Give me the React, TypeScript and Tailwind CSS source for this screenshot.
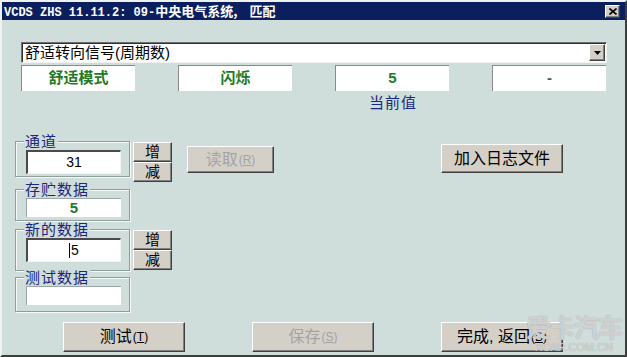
const cjk = "font-['Liberation_Sans','Noto_Sans_CJK_SC',sans-serif]";

const raised =
  "bg-[#d4d0c8] border border-t-white border-l-white border-r-[#404040] border-b-[#404040] shadow-[inset_-1px_-1px_0_#808080]";

const Btn = ({ label, hot, disabled, className }: { label: string; hot?: string; disabled?: boolean; className: string }) => (
  <div className={`${raised} ${className} flex items-center justify-center ${disabled ? "text-[#a4a4a4]" : "text-black"}`}>
    <span className="text-[16px] leading-none">{label}</span>
    {hot && (
      <span className="text-[12px] leading-none ml-[1px]">
        (<span className="underline">{hot}</span>)
      </span>
    )}
  </div>
);

const Group = ({ label, className, children }: { label: string; className: string; children: React.ReactNode }) => (
  <div className={`relative shrink-0 w-[115px] border border-[#8e9e9b] shadow-[inset_1px_1px_0_#f4f8f7,1px_1px_0_#f4f8f7] pl-[10px] pt-[8px] ${className}`}>
    <span className="absolute -top-[8px] left-[8px] px-[1px] bg-[#cfdedb] text-[15px] leading-[15px] text-[#1a2780] tracking-[1px]">
      {label}
    </span>
    {children}
  </div>
);

const Spin = ({ className }: { className: string }) => (
  <div className={`flex flex-col w-[39px] shrink-0 ${className}`}>
    <div className={`${raised} h-[20px] flex items-center justify-center text-[15px]`}>增</div>
    <div className={`${raised} h-[20px] flex items-center justify-center text-[15px]`}>减</div>
  </div>
);

export default function App() {
  return (
    <div className={`relative w-[627px] h-[357px] overflow-hidden bg-[#cfdedb] border-2 border-t-[#eef3f2] border-l-[#eef3f2] border-r-[#3c3c3c] border-b-[#3c3c3c] ${cjk}`}>
      {/* title bar */}
      <div className="h-[18px] bg-[#0b1f5e] flex items-center pl-[2px] pr-[5px]">
        <span className="text-white font-bold text-[12px] leading-none font-['Liberation_Mono','Noto_Sans_CJK_SC',monospace]">
          VCDS ZHS 11.11.2: 09-
          <span className="text-[13px] font-['Noto_Sans_CJK_SC',sans-serif]">中央电气系统,</span>
          <span className="ml-[12px] text-[13px] font-['Noto_Sans_CJK_SC',sans-serif]">匹配</span>
        </span>
        <div className={`ml-auto w-[15px] h-[13px] ${raised} flex items-center justify-center`}>
          <svg width="8" height="7" viewBox="0 0 8 7">
            <path d="M0.5 0.5 L7.5 6.5 M7.5 0.5 L0.5 6.5" stroke="#000" strokeWidth="1.6" />
          </svg>
        </div>
      </div>

      {/* top section */}
      <div className="pl-[19px]">
        <div className="mt-[22px] w-[586px] h-[21px] bg-white border-t border-l border-[#6e6e6e] shadow-[inset_1px_1px_0_#303030] border-b border-r border-b-[#f2f2f2] border-r-[#f2f2f2] flex items-center">
          <span className="ml-[3px] text-[15px] leading-none text-black">舒适转向信号(周期数)</span>
          <div className={`ml-auto mr-[1px] w-[16px] h-[17px] ${raised} flex items-center justify-center`}>
            <svg width="7" height="4" viewBox="0 0 7 4">
              <path d="M0 0 H7 L3.5 4 Z" fill="#000" />
            </svg>
          </div>
        </div>

        <div className="mt-[2px] flex gap-[43px]">
          {["舒适模式", "闪烁", "5", "-"].map((v, i) => (
            <div
              key={i}
              className={`w-[114px] h-[26px] bg-white border-t border-l border-[#8a8a8a] flex items-center justify-center text-[15px] font-bold ${i === 3 ? "text-[#555]" : "text-[#237a23]"}`}
            >
              {v}
            </div>
          ))}
        </div>
        <div className="mt-[3px] h-[16px] w-[114px] ml-[315px] flex items-center justify-center text-[15px] leading-none text-[#1a2780] tracking-[1px]">
          当前值
        </div>
      </div>

      {/* lower section */}
      <div className="pl-[13px] mt-[31px] text-black">
        <div className="flex items-start h-[36px]">
          <Group label="通道" className="h-[36px]">
            <div className="w-[95px] h-[24px] bg-white border-t-2 border-l-2 border-[#4a4a4a] border-b border-r border-b-[#f4f4f4] border-r-[#f4f4f4] flex items-center justify-center text-[14px]">
              31
            </div>
          </Group>
          <Spin className="ml-[3px] mt-[1px]" />
          <Btn label="读取" hot="R" disabled className="ml-[15px] mt-[5px] w-[87px] h-[27px]" />
          <Btn label="加入日志文件" className="ml-[167px] mt-[3px] w-[122px] h-[29px]" />
        </div>

        <Group label="存贮数据" className="mt-[12px] h-[32px]">
          <div className="w-[95px] h-[19px] bg-white border-t border-l border-[#9aa6a4] flex items-center justify-center text-[15px] font-bold text-[#237a23]">
            5
          </div>
        </Group>

        <div className="flex items-start h-[42px] mt-[8px]">
          <Group label="新的数据" className="h-[42px]">
            <div className="w-[95px] h-[24px] bg-white border-t-2 border-l-2 border-[#4a4a4a] border-b border-r border-b-[#f4f4f4] border-r-[#f4f4f4] flex items-center justify-center text-[14px]">
              <span className="w-[1px] h-[15px] bg-black mr-[1px]" />
              5
            </div>
          </Group>
          <Spin className="ml-[3px] mt-[1px]" />
        </div>

        <Group label="测试数据" className="mt-[6px] h-[35px]">
          <div className="w-[95px] h-[19px] bg-white border-t border-l border-[#9aa6a4]" />
        </Group>

        <div className="mt-[10px] ml-[48px] flex gap-[67px]">
          <Btn label="测试" hot="T" className="w-[122px] h-[30px]" />
          <Btn label="保存" hot="S" disabled className="w-[122px] h-[30px]" />
          <Btn label="完成, 返回" hot="B" className="w-[122px] h-[30px]" />
        </div>
      </div>

      {/* watermark */}
      <div className="absolute right-[3px] bottom-[2px] flex flex-col items-center text-white/60 pointer-events-none [text-shadow:0_0_1px_#888]">
        <span className="text-[25px] leading-[26px] font-bold tracking-[-1px]">爱卡汽车</span>
        <span className="text-[11px] leading-[12px]">XCAR.COM.CN</span>
      </div>
    </div>
  );
}
